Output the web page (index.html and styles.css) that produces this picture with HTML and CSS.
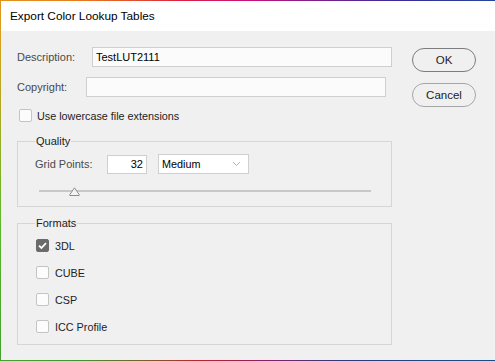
FILE: index.html
```html
<!DOCTYPE html>
<html>
<head>
<meta charset="utf-8">
<link rel="stylesheet" href="styles.css">
</head>
<body>
<div class="frame">
  <div class="window">
    <div class="titlebar">Export Color Lookup Tables</div>
    <div class="content">
      <div class="main">
        <div class="row desc">
          <span class="lbl lbl-desc">Description:</span>
          <div class="input field">TestLUT2111</div>
        </div>
        <div class="row copy">
          <span class="lbl lbl-copy">Copyright:</span>
          <div class="input field"></div>
        </div>
        <div class="check-row lower">
          <span class="cb"></span>
          <span class="check-text">Use lowercase file extensions</span>
        </div>
        <fieldset class="group quality">
          <legend>Quality</legend>
          <div class="grid-row">
            <span class="lbl lbl-grid">Grid Points:</span>
            <div class="input num">32</div>
            <div class="select">
              <span>Medium</span>
              <svg class="chev" width="9" height="6" viewBox="0 0 9 6"><path d="M1 1 L4.5 4.5 L8 1" fill="none" stroke="#b4b4b4" stroke-width="1"/></svg>
            </div>
          </div>
          <div class="slider">
            <div class="track"></div>
            <svg class="thumb" width="11" height="9" viewBox="0 0 11 9"><path d="M5.5 0.8 L10.2 7.6 L10.2 8.5 L0.8 8.5 L0.8 7.6 Z" fill="#f4f4f4" stroke="#8c8c8c" stroke-width="1"/></svg>
          </div>
        </fieldset>
        <fieldset class="group formats">
          <legend>Formats</legend>
          <div class="fmt-list">
            <div class="check-row fmt">
              <span class="cb checked"><svg width="13" height="13" viewBox="0 0 13 13"><path d="M3 6.6 L5.4 9 L10 4.2" fill="none" stroke="#fff" stroke-width="1.8"/></svg></span>
              <span class="check-text">3DL</span>
            </div>
            <div class="check-row fmt">
              <span class="cb"></span>
              <span class="check-text">CUBE</span>
            </div>
            <div class="check-row fmt">
              <span class="cb"></span>
              <span class="check-text">CSP</span>
            </div>
            <div class="check-row fmt">
              <span class="cb"></span>
              <span class="check-text">ICC Profile</span>
            </div>
          </div>
        </fieldset>
      </div>
      <div class="buttons">
        <div class="btn ok">OK</div>
        <div class="btn cancel">Cancel</div>
      </div>
    </div>
  </div>
</div>
</body>
</html>
```
FILE: styles.css
```css
html, body {
  margin: 0;
  padding: 0;
  background: #f0f0f0;
}
body {
  font-family: "Liberation Sans", Arial, sans-serif;
  font-size: 11px;
  color: #222;
}
.frame {
  width: 495px;
  height: 361px;
  box-sizing: border-box;
  padding: 1px 0 1px 1px;
  background: conic-gradient(from 0deg at 50% 50%,
    #c8127a 0deg, #3b2a9a 40deg, #1b4f9c 60deg, #1a4f8a 120deg,
    #2a3a80 150deg, #8a2060 175deg, #c02030 195deg, #3a9a30 225deg,
    #5cb82c 260deg, #d8a020 300deg, #e8801c 315deg, #d82040 340deg, #c8127a 360deg);
}
.window {
  height: 100%;
  background: #f0f0f0;
  display: flex;
  flex-direction: column;
}
.titlebar {
  height: 30px;
  background: #fff;
  display: flex;
  align-items: center;
  padding-left: 9px;
  font-size: 11.8px;
  color: #000;
}
.content {
  display: flex;
  padding: 16px 0 0 16px;
}
.main {
  width: 375px;
  display: flex;
  flex-direction: column;
}
.row {
  display: flex;
  align-items: center;
  height: 20px;
}
.copy {
  margin-top: 10px;
}
.lbl {
  color: #4a4a4a;
}
.lbl-desc { width: 75px; }
.lbl-copy { width: 69px; }
.input {
  box-sizing: border-box;
  height: 20px;
  border: 1px solid #cfcfcf;
  background: #fbfbfb;
  color: #000;
  display: flex;
  align-items: center;
  font-size: 11px;
}
.field {
  width: 300px;
  padding-left: 3px;
}
.check-row {
  display: flex;
  align-items: center;
  height: 13px;
}
.lower {
  margin-top: 12px;
  padding-left: 2px;
}
.cb {
  box-sizing: border-box;
  width: 13px;
  height: 13px;
  border: 1px solid #c4c4c4;
  border-radius: 2px;
  background: #fcfcfc;
  display: flex;
}
.cb.checked {
  background: #6b6b6b;
  border-color: #6b6b6b;
}
.cb svg {
  margin: -1px;
}
.check-text {
  margin-left: 5px;
  color: #222;
  font-size: 10.8px;
}
.fmt .check-text {
  margin-left: 6px;
}
.group {
  box-sizing: border-box;
  width: 375px;
  margin: 0;
  min-width: 0;
  border: 1px solid #d6d6d6;
  padding: 0 0 0 17px;
}
.group legend {
  padding: 0 1px;
  line-height: 14px;
  height: 14px;
  color: #222;
  font-size: 11px;
}
.quality {
  margin-top: 12px;
  padding-bottom: 10px;
}
.grid-row {
  display: flex;
  align-items: center;
  margin-top: 6px;
  height: 20px;
}
.lbl-grid {
  width: 72px;
}
.num {
  width: 40px;
  height: 19px;
  justify-content: flex-end;
  padding-right: 3px;
  background: #fff;
}
.select {
  box-sizing: border-box;
  width: 91px;
  height: 20px;
  margin-left: 11px;
  border: 1px solid #d0d0d0;
  background: #fff;
  display: flex;
  align-items: center;
  justify-content: space-between;
  padding: 0 7px 0 3px;
  color: #000;
  font-size: 10.8px;
}
.slider {
  position: relative;
  margin: 10px 0 0 4px;
  width: 332px;
  height: 12px;
}
.track {
  position: absolute;
  left: 0;
  right: 0;
  top: 6px;
  height: 2px;
  background: #c8c8c8;
}
.thumb {
  position: absolute;
  left: 30px;
  top: 3px;
}
.formats {
  margin-top: 9px;
  padding-bottom: 11px;
}
.fmt-list {
  margin-top: 9px;
  display: flex;
  flex-direction: column;
  gap: 14px;
  padding-left: 1px;
}
.buttons {
  margin-left: 20px;
  padding-top: 1px;
  display: flex;
  flex-direction: column;
  gap: 11px;
}
.btn {
  box-sizing: border-box;
  width: 64px;
  height: 24px;
  border: 1px solid #a6a6a6;
  border-radius: 12px;
  display: flex;
  align-items: center;
  justify-content: center;
  color: #222;
  font-size: 11.5px;
}
.btn.ok {
  border-color: #7c7c7c;
}
```
